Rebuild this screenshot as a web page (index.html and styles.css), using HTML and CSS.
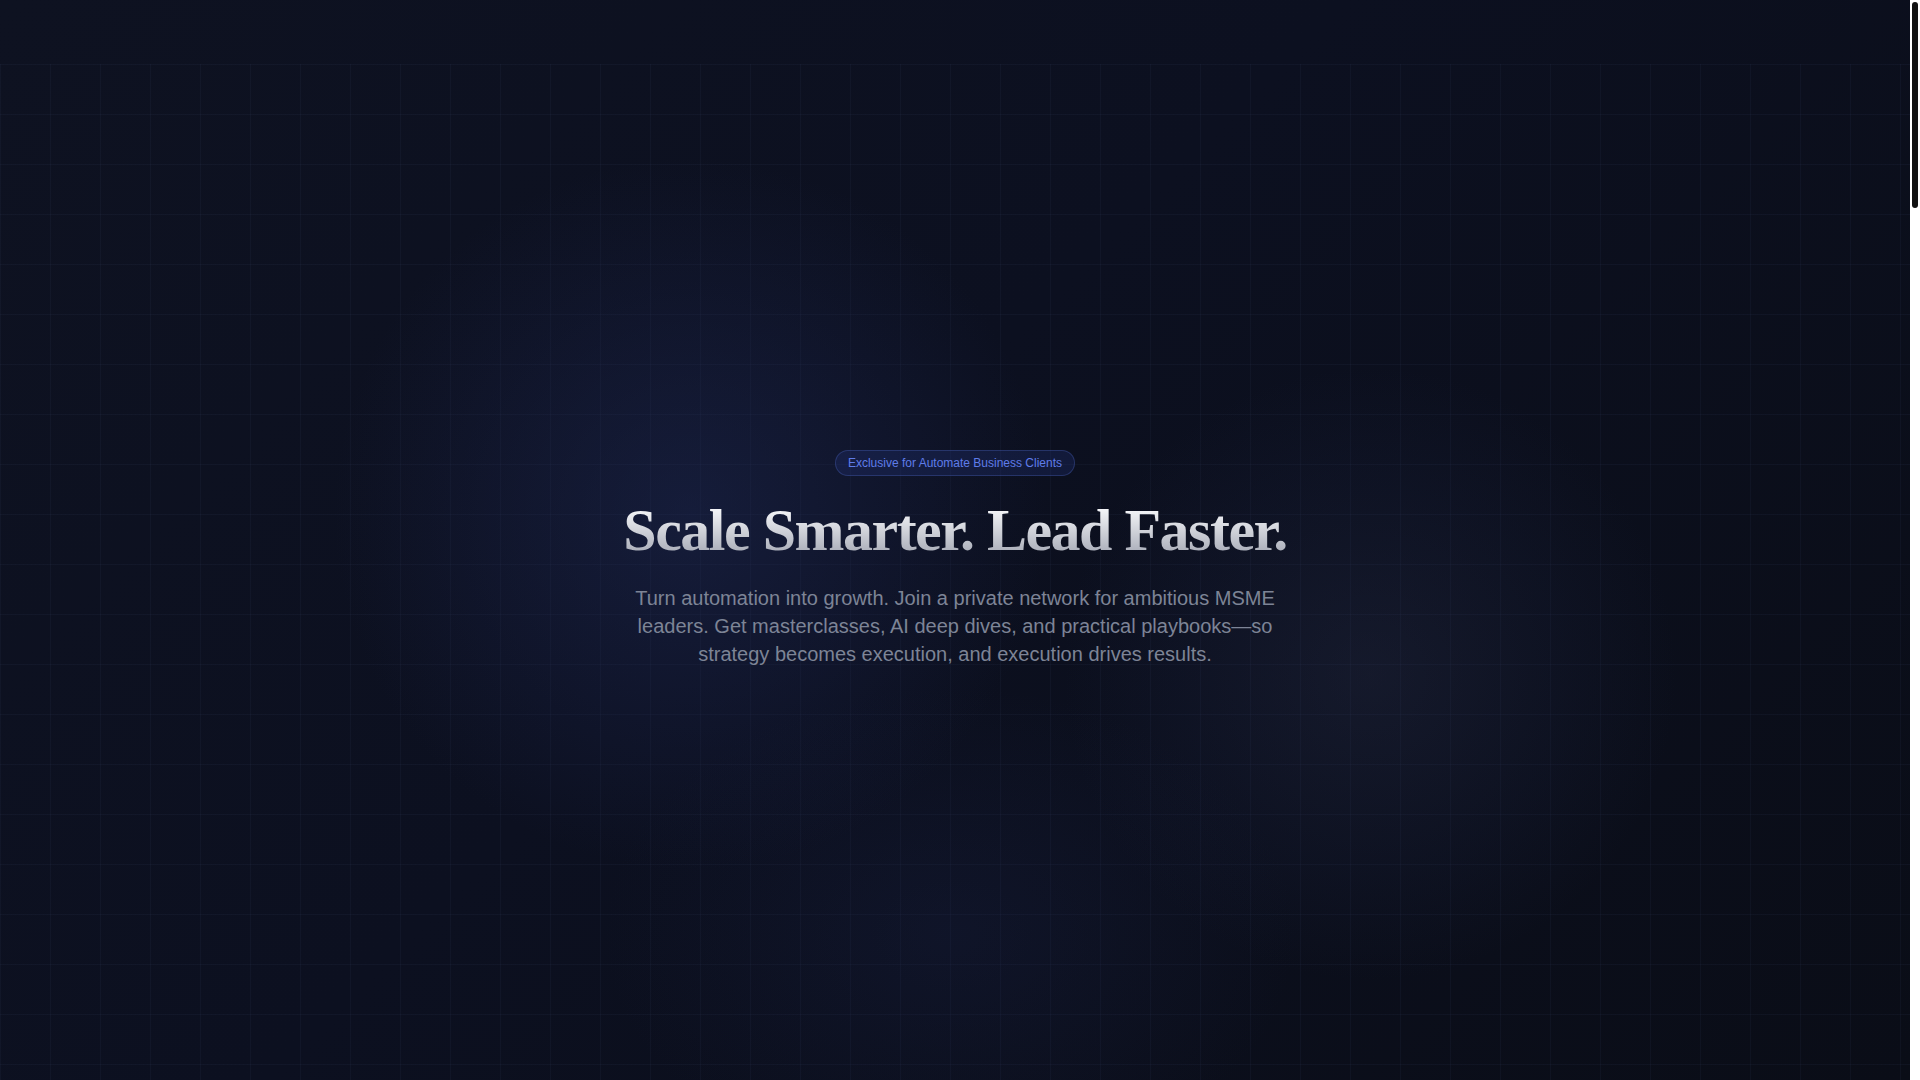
FILE: index.html
```html
<!DOCTYPE html>
<html lang="en">
<head>
<meta charset="utf-8">
<title>Scale Smarter. Lead Faster.</title>
<link rel="stylesheet" href="styles.css">
</head>
<body>
<div class="frame">
  <div class="page">
    <header class="nav"></header>
    <section class="hero">
      <div class="glow glow-a"></div>
      <div class="glow glow-b"></div>
      <div class="glow glow-c"></div>
      <div class="hero-inner">
        <span class="badge">Exclusive for Automate Business Clients</span>
        <h1 class="title">Scale Smarter. Lead Faster.</h1>
        <p class="lead">Turn automation into growth. Join a private network for ambitious MSME leaders. Get masterclasses, AI deep dives, and practical playbooks—so strategy becomes execution, and execution drives results.</p>
      </div>
    </section>
  </div>
  <div class="scrollbar"><div class="scroll-thumb"></div></div>
</div>
</body>
</html>
```

FILE: styles.css
```css
html, body {
  margin: 0;
  padding: 0;
  height: 100%;
  overflow: hidden;
  background: #0b0f1a;
}
body {
  font-family: "Liberation Sans", Arial, sans-serif;
  color: #e5e7eb;
}
.frame {
  display: flex;
  height: 100vh;
}
.page {
  flex: 1;
  min-width: 0;
  overflow: hidden;
  background: linear-gradient(135deg, #0e1221 0%, #0c1020 45%, #0a0d17 100%);
}
.scrollbar {
  width: 10px;
  flex: none;
  background: #ffffff;
  padding: 2px;
  box-sizing: border-box;
}
.scroll-thumb {
  height: 206px;
  border-radius: 3px;
  background: #111111;
}
.nav {
  height: 64px;
}
.hero {
  position: relative;
  overflow: hidden;
  min-height: 1016px;
  display: flex;
  align-items: center;
  justify-content: center;
  box-sizing: border-box;
  padding-bottom: 26px;
  background-image:
    linear-gradient(to right, rgba(120, 140, 200, 0.05) 1px, transparent 1px),
    linear-gradient(to bottom, rgba(120, 140, 200, 0.05) 1px, transparent 1px);
  background-size: 50px 50px;
}
.glow {
  position: absolute;
  border-radius: 50%;
  pointer-events: none;
}
.glow-a {
  left: 330px;
  top: 90px;
  width: 720px;
  height: 720px;
  background: radial-gradient(circle, rgba(36, 48, 100, 0.38) 0%, rgba(32, 42, 90, 0.2) 40%, rgba(20, 30, 70, 0) 70%);
}
.glow-b {
  left: 1060px;
  top: 300px;
  width: 620px;
  height: 620px;
  background: radial-gradient(circle, rgba(60, 68, 105, 0.2) 0%, rgba(40, 50, 90, 0.1) 45%, rgba(30, 40, 70, 0) 70%);
}
.glow-c {
  left: 600px;
  top: 620px;
  width: 700px;
  height: 500px;
  background: radial-gradient(ellipse, rgba(32, 42, 88, 0.2) 0%, rgba(25, 35, 80, 0) 70%);
}
.hero-inner {
  position: relative;
  display: flex;
  flex-direction: column;
  align-items: center;
  text-align: center;
}
.badge {
  display: inline-block;
  font-size: 12px;
  line-height: 16px;
  padding: 4px 12px;
  border-radius: 999px;
  color: #5f7ce9;
  background: rgba(35, 55, 130, 0.28);
  border: 1px solid rgba(80, 105, 200, 0.32);
  margin-bottom: 24px;
}
.title {
  margin: 0 0 24px;
  font-family: "Liberation Serif", "Times New Roman", serif;
  font-weight: 700;
  font-size: 60px;
  line-height: 60px;
  letter-spacing: -0.025em;
  background: linear-gradient(to bottom, #f4f5f8 15%, #a4a8b4 95%);
  -webkit-background-clip: text;
  background-clip: text;
  color: transparent;
}
.lead {
  margin: 0;
  max-width: 672px;
  font-size: 20px;
  line-height: 28px;
  color: #7d8496;
}
```
